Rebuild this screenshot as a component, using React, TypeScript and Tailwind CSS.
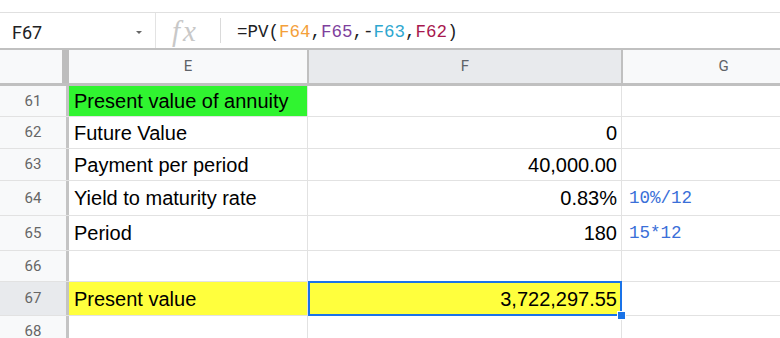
import React from 'react';

type Row = {
  n: number;
  h: string;
  e?: string;
  f?: string;
  g?: string;
  fill?: 'green' | 'yellow';
};

const rows: Row[] = [
  { n: 61, h: 'h-[31px]', e: 'Present value of annuity', fill: 'green' },
  { n: 62, h: 'h-[32px]', e: 'Future Value', f: '0' },
  { n: 63, h: 'h-[32px]', e: 'Payment per period', f: '40,000.00' },
  { n: 64, h: 'h-[35px]', e: 'Yield to maturity rate', f: '0.83%', g: '10%/12' },
  { n: 65, h: 'h-[35px]', e: 'Period', f: '180', g: '15*12' },
  { n: 66, h: 'h-[31px]' },
  { n: 67, h: 'h-[34px]', e: 'Present value', f: '3,722,297.55', fill: 'yellow' },
  { n: 68, h: 'h-[31px]' },
];

const mono = "font-['Liberation_Mono',monospace]";
const roboto = "font-['Roboto','Liberation_Sans',sans-serif]";

const FormulaBar = () => (
  <div className="flex h-[36px] shrink-0 border-t border-[#e0e0e0] bg-white">
    <div className={`flex w-[155px] items-center justify-between pl-[12px] pr-[13px] pt-[3px] text-[18px] text-[#202124] ${roboto}`}>
      <span>F67</span>
      <span className="h-0 w-0 border-x-[3px] border-t-[3px] border-x-transparent border-t-[#666]" />
    </div>
    <div className="w-px bg-[#e3e3e3]" />
    <div className="flex w-[64px] items-center pl-[16px] pt-[2px]">
      <span className="font-['Liberation_Serif',serif] text-[29px] italic leading-none tracking-[3px] text-[#c8c8c8]">fx</span>
    </div>
    <div className="my-[5px] w-px bg-[#dadada]" />
    <div className={`flex items-center pl-[16px] pt-[3px] text-[17.5px] text-[#202124] ${mono}`}>
      =PV(<span className="text-[#f4a03a]">F64</span>,<span className="text-[#7e3f9d]">F65</span>,-<span className="text-[#2ea7cf]">F63</span>,<span className="text-[#a8174e]">F62</span>)
    </div>
  </div>
);

const HeaderRow = () => (
  <div className={`flex h-[38px] shrink-0 border-t-2 border-b-[3px] border-[#c0c0c0] text-[15px] text-[#5f6368] ${roboto}`}>
    <div className="w-[62px] bg-[#f8f9fa]" />
    <div className="w-[7px] bg-[#bdbdbd]" />
    <div className="flex w-[240px] items-center justify-center border-r-2 border-[#c0c0c0] bg-[#f8f9fa]">E</div>
    <div className="flex w-[314px] items-center justify-center border-r-2 border-[#c0c0c0] bg-[#e8eaed]">F</div>
    <div className="flex flex-1 items-center justify-center bg-[#f8f9fa] pl-[44px]">G</div>
  </div>
);

const DataRow = ({ r }: { r: Row }) => {
  const selected = r.n === 67;
  const bgE = r.fill === 'green' ? 'bg-[#30f430]' : r.fill === 'yellow' ? 'bg-[#ffff3d]' : 'bg-white';
  const bgF = r.fill === 'yellow' ? 'bg-[#ffff3d]' : 'bg-white';
  const line = r.n === 66 ? 'border-b-[#dede48]' : '';
  return (
    <div className={`flex ${r.h} shrink-0 border-b border-[#e2e2e2]`}>
      <div
        className={`flex w-[69px] items-center justify-center border-r-[3px] border-[#c4c4c4] text-[15px] text-[#666] ${roboto} ${
          selected ? 'bg-[#e8eaed]' : 'bg-[#f8f9fa]'
        }`}
      >
        {r.n}
      </div>
      <div
        className={`flex w-[239px] items-center border-r border-[#e2e2e2] pl-[5px] font-['Liberation_Sans',Arial,sans-serif] text-[20px] text-black ${bgE}`}
      >
        {r.e}
      </div>
      <div
        className={`relative flex w-[314px] items-center justify-end border-r border-[#e2e2e2] pr-[4px] font-['Liberation_Sans',Arial,sans-serif] text-[20px] text-black ${bgF} ${line}`}
      >
        {r.f}
        {selected && (
          <>
            <div className="absolute -top-[1px] left-0 -right-[1px] -bottom-[1px] z-10 border-2 border-[#1a73e8]" />
            <div className="absolute -right-[5px] -bottom-[5px] z-20 h-[9px] w-[9px] border border-white bg-[#1a73e8]" />
          </>
        )}
      </div>
      <div className={`flex flex-1 items-center pl-[7px] text-[17.5px] text-[#3a6fd8] ${mono}`}>{r.g}</div>
    </div>
  );
};

export default function App() {
  return (
    <div className="flex h-[338px] w-[780px] flex-col overflow-hidden bg-white">
      <div className="h-[12px] shrink-0" />
      <FormulaBar />
      <HeaderRow />
      {rows.map((r) => (
        <DataRow key={r.n} r={r} />
      ))}
    </div>
  );
}
